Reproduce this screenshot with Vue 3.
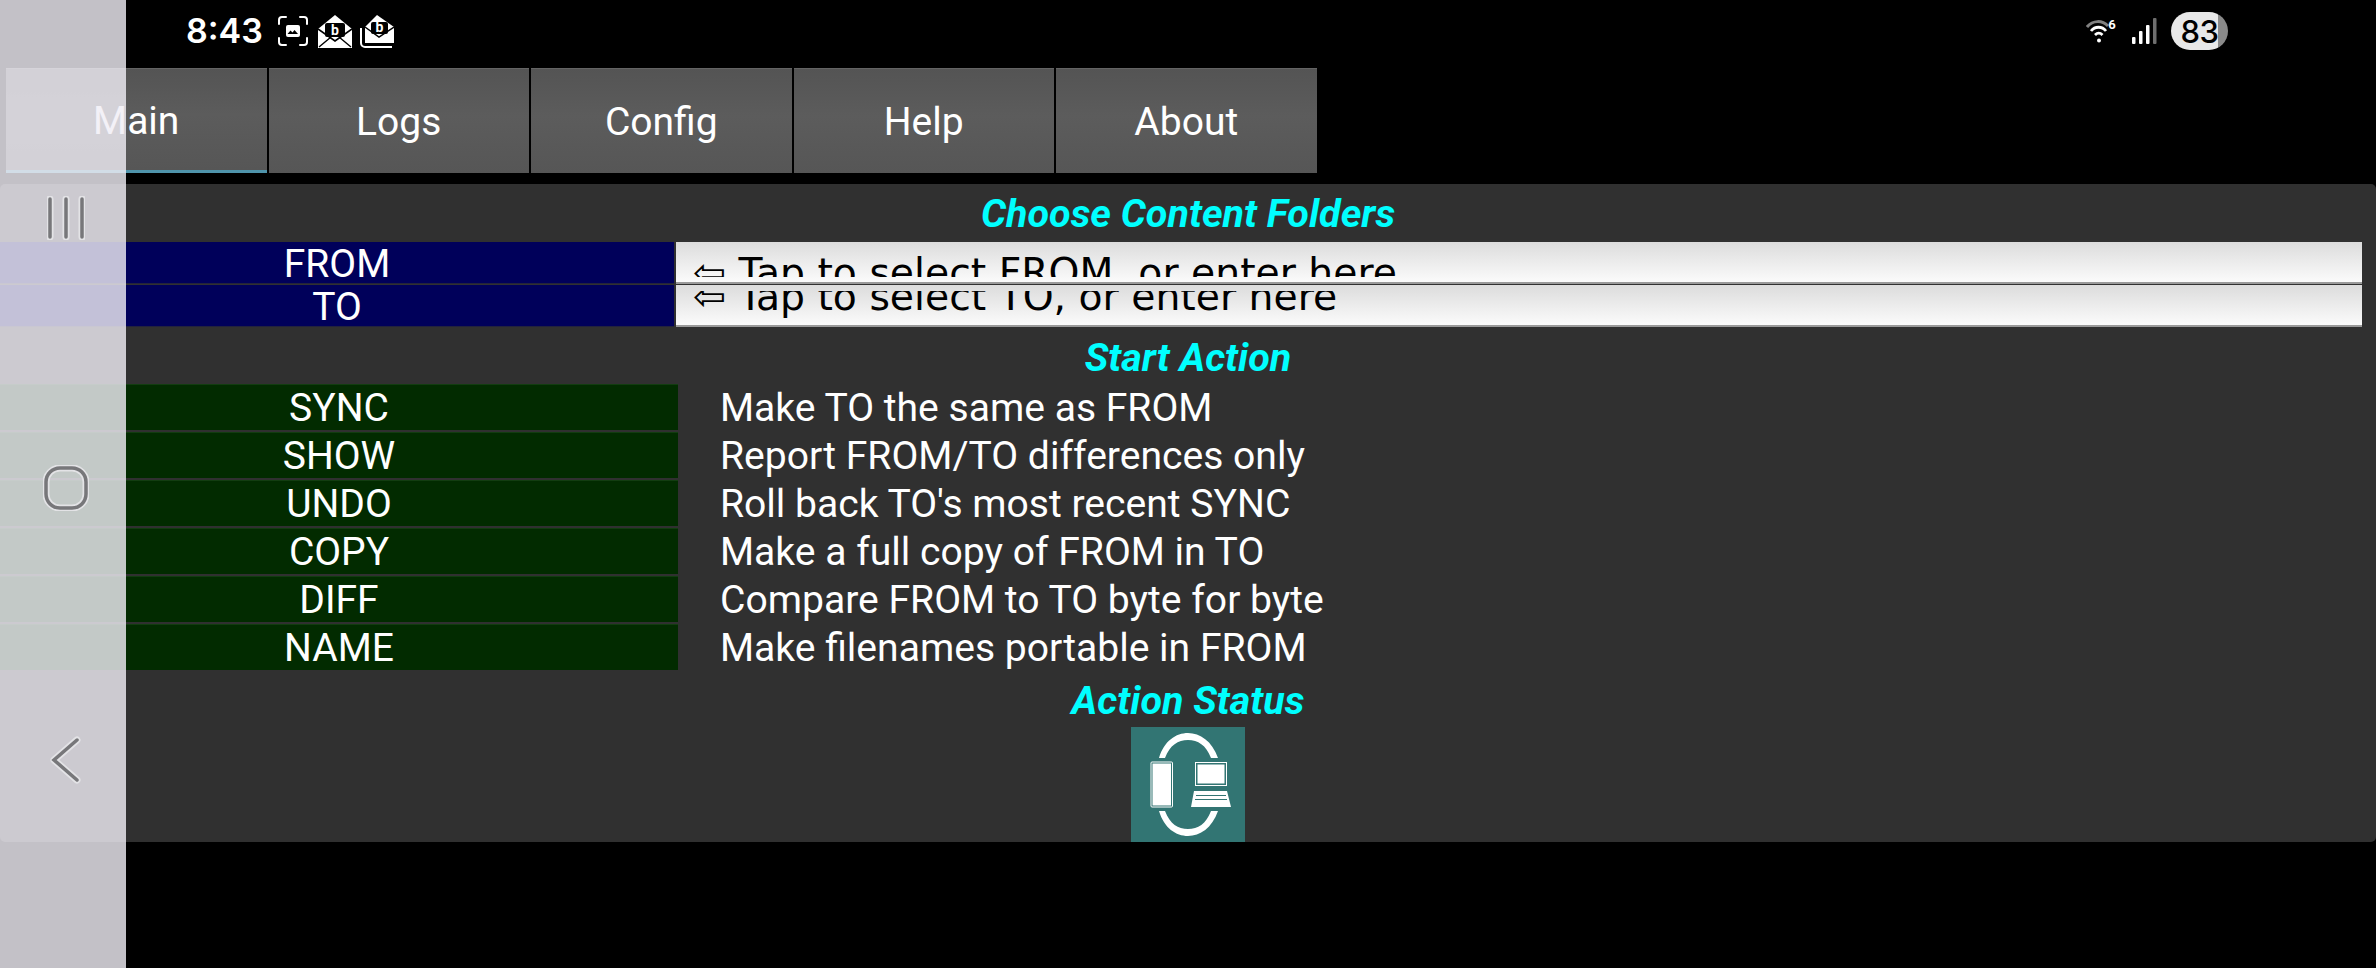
<script setup>
const tabs = ['Main', 'Logs', 'Config', 'Help', 'About']
const actions = [
  ['SYNC', 'Make TO the same as FROM'],
  ['SHOW', 'Report FROM/TO differences only'],
  ['UNDO', "Roll back TO's most recent SYNC"],
  ['COPY', 'Make a full copy of FROM in TO'],
  ['DIFF', 'Compare FROM to TO byte for byte'],
  ['NAME', 'Make filenames portable in FROM'],
]
const envelopeBody = 'M0 14 L17 0 L34 14 L34 33 L0 33 Z'
</script>

<template>
  <div class="screen">
    <header class="status">
      <span class="time">8:43</span>
      <svg class="ic-shot" width="30" height="30" viewBox="0 0 30 30" fill="none">
        <path d="M1 8V4a3 3 0 0 1 3-3h4M22 1h4a3 3 0 0 1 3 3v4M29 22v4a3 3 0 0 1-3 3h-4M8 29H4a3 3 0 0 1-3-3v-4" stroke="#fff" stroke-width="2" stroke-linecap="round"/>
        <rect x="8" y="9" width="14" height="12" rx="2" fill="#fff"/>
        <path d="M9.5 18l3-3.5 2 2 2-2.5 3.5 4z" fill="#000"/>
      </svg>
      <svg class="ic-env" width="34" height="33" viewBox="0 0 34 33">
        <path :d="envelopeBody" fill="#fff"/>
        <rect x="7" y="8" width="20" height="14" rx="2" fill="#000"/>
        <path d="M0 14l17 12 17-12" fill="none" stroke="#000" stroke-width="1.6"/>
        <path d="M1 32l12-10M33 32L21 22" stroke="#000" stroke-width="1.4"/>
        <text x="17" y="20" text-anchor="middle" class="env-b">b</text>
      </svg>
      <svg class="ic-env second" width="34" height="33" viewBox="0 0 34 33">
        <path d="M5 12 L17 0 L34 12 L34 28 L5 28 Z" fill="#fff"/>
        <rect x="11" y="7" width="17" height="12" rx="2" fill="#000"/>
        <path d="M5 12l14 10 15-10" fill="none" stroke="#000" stroke-width="1.5"/>
        <path d="M1 13v15a4 4 0 0 0 4 4h27" fill="none" stroke="#fff" stroke-width="2"/>
        <text x="19.5" y="17" text-anchor="middle" class="env-b">b</text>
      </svg>
      <div class="status-right">
        <svg width="31" height="24" viewBox="0 0 31 24" fill="none">
          <path d="M1 8C7 1 16 1 22 7" stroke="#808080" stroke-width="3"/>
          <path d="M5 12c4-5 11-5 15 0" stroke="#fff" stroke-width="2.8"/>
          <path d="M9 16c2.500-2.500 5-2.500 7.500 0" stroke="#fff" stroke-width="2.8"/>
          <circle cx="13" cy="21.500" r="2" fill="#fff"/>
          <text x="26" y="10" text-anchor="middle" class="wifi-6">6</text>
        </svg>
        <svg class="signal" width="25" height="26" viewBox="0 0 25 26">
          <rect x="0" y="19" width="3.500" height="7" rx="1" fill="#fff"/>
          <rect x="7" y="13" width="3.500" height="13" rx="1" fill="#fff"/>
          <rect x="14" y="7" width="3.500" height="19" rx="1" fill="#fff"/>
          <rect x="21" y="0" width="3.500" height="26" rx="1" fill="#6e6e6e"/>
        </svg>
        <div class="battery"><span>83</span></div>
      </div>
    </header>

    <nav class="tabs">
      <div v-for="(tab, i) in tabs" :key="tab" class="tab" :class="{ active: i === 0 }">{{ tab }}</div>
    </nav>

    <main class="content">
      <h2 class="title first">Choose Content Folders</h2>
      <div class="folders">
        <div class="folder">
          <div class="folder-label">FROM</div>
          <div class="field">
            <div class="clip clip-from"><span class="field-text"><span class="arrow">⇦</span> Tap to select FROM, or enter here</span></div>
          </div>
        </div>
        <div class="folder">
          <div class="folder-label">TO</div>
          <div class="field">
            <div class="clip clip-to"><span class="field-text"><span class="arrow">⇦</span> Tap to select TO, or enter here</span></div>
          </div>
        </div>
      </div>

      <h2 class="title">Start Action</h2>
      <div class="actions">
        <div v-for="a in actions" :key="a[0]" class="action">
          <div class="action-btn">{{ a[0] }}</div>
          <div class="action-desc">{{ a[1] }}</div>
        </div>
      </div>

      <h2 class="title">Action Status</h2>
      <div class="status-icon">
        <svg width="114" height="115" viewBox="0 0 114 115">
          <rect width="114" height="115" fill="#327573"/>
          <path d="M28 31C33 14 45 6 57 6C69 6 81 14 87 31L80 31C75 18 67 13 57 13C47 13 39 18 34 31Z" fill="#fff"/>
          <path d="M28 84C33 101 45 109 57 109C69 109 81 101 87 84L80 84C75 97 67 102 57 102C47 102 39 97 34 84Z" fill="#fff"/>
          <rect x="20" y="35" width="21.500" height="45" rx="1" fill="none" stroke="#fff" stroke-width="1"/>
          <rect x="21.500" y="36.500" width="18.500" height="42" fill="#fff"/>
          <rect x="64.500" y="35.500" width="31" height="23" fill="none" stroke="#fff" stroke-width="1"/>
          <rect x="66.500" y="37.500" width="27" height="19" fill="#fff"/>
          <path d="M63 64H96L100 80H60Z" fill="#fff"/>
          <path d="M65 68.500H95M64 72.500H96" stroke="#327573" stroke-width="1"/>
        </svg>
      </div>
    </main>

    <aside class="nav-overlay">
      <svg width="38" height="44" viewBox="0 0 38 44" fill="none" class="nav-icon">
        <path d="M3 3v38M19 3v38M35 3v38" stroke="#e3e3e6" stroke-width="7" stroke-linecap="round"/>
        <path d="M3 3v38M19 3v38M35 3v38" stroke="#77777a" stroke-width="3.500" stroke-linecap="round"/>
      </svg>
      <svg width="46" height="46" viewBox="0 0 46 46" fill="none" class="nav-icon">
        <rect x="3" y="3" width="40" height="40" rx="14" stroke="#e3e3e6" stroke-width="7"/>
        <rect x="3" y="3" width="40" height="40" rx="14" stroke="#77777a" stroke-width="3.500"/>
      </svg>
      <svg width="34" height="48" viewBox="0 0 34 48" fill="none" class="nav-icon">
        <path d="M28 4L5 24l23 20" stroke="#e3e3e6" stroke-width="7" stroke-linecap="round" stroke-linejoin="round"/>
        <path d="M28 4L5 24l23 20" stroke="#77777a" stroke-width="3.500" stroke-linecap="round"/>
      </svg>
    </aside>
  </div>
</template>

<style>
html, body { margin: 0; background: #000; overflow: hidden; }
</style>

<style scoped>
.screen {
  position: relative;
  width: 2376px;
  height: 968px;
  background: #000;
  color: #fff;
  font-family: Roboto, sans-serif;
  overflow: hidden;
}
.status {
  height: 68px;
  display: flex;
  align-items: center;
  padding: 0 148px 6px 186px;
  box-sizing: border-box;
}
.time {
  font-family: Inter, sans-serif;
  font-weight: 600;
  font-size: 34px;
  line-height: 1;
  margin-right: 15px;
}
.ic-env { margin-left: 10px; }
.ic-env.second { margin-left: 8px; }
.env-b {
  fill: #fff;
  font: 700 14px Roboto, sans-serif;
}
.wifi-6 {
  fill: #fff;
  font: 700 13px Roboto, sans-serif;
}
.status-right {
  margin-left: auto;
  display: flex;
  align-items: center;
}
.signal { margin-left: 15px; }
.battery {
  margin-left: 14px;
  width: 57px;
  height: 38px;
  border-radius: 19px;
  background: linear-gradient(90deg, #e8e8e8 82%, #8a8a8a 82%);
  color: #000;
  font-family: Inter, sans-serif;
  font-weight: 500;
  font-size: 31px;
  display: flex;
  align-items: center;
  justify-content: center;
  letter-spacing: -0.500px;
}
.tabs {
  height: 105px;
  display: flex;
  gap: 2px;
  padding-left: 6px;
}
.tab {
  width: 260.500px;
  box-sizing: border-box;
  display: flex;
  align-items: center;
  justify-content: center;
  font-size: 39px;
  padding-top: 2px;
  background: linear-gradient(180deg, #545454 0%, #5c5c5c 45%, #565656 100%);
  border-top: 1px solid #646464;
}
.tab.active {
  border-bottom: 3px solid #4f94ab;
}
.content {
  margin-top: 11px;
  height: 658px;
  background: #303030;
  border-radius: 5px;
  display: flex;
  flex-direction: column;
}
.title {
  margin: 0;
  height: 58px;
  padding-top: 4px;
  box-sizing: border-box;
  display: flex;
  align-items: center;
  justify-content: center;
  color: #0ff;
  font-size: 39.500px;
  font-weight: 700;
  font-style: italic;
}
.title.first { padding-top: 1px; }
.folders {
  display: flex;
  flex-direction: column;
  gap: 1px;
}
.folder {
  height: 42px;
  display: flex;
  gap: 2px;
}
.folder-label {
  width: 674px;
  background: #00005a;
  font-size: 39px;
  padding-top: 3px;
  display: flex;
  align-items: center;
  justify-content: center;
  border-bottom: 1px solid #22223e;
  box-sizing: border-box;
}
.field {
  width: 1686px;
  background: linear-gradient(180deg, #dcdcdc 0%, #fbfbfb 100%);
  border-bottom: 2px solid #9a9a9a;
  box-sizing: border-box;
  color: #000;
}
.clip {
  height: 35px;
  overflow: hidden;
  font-family: "DejaVu Sans", sans-serif;
  font-size: 39.300px;
  white-space: nowrap;
  padding-left: 17px;
  box-sizing: border-box;
}
.clip-to { margin-top: 6px; }
.field-text {
  display: block;
  line-height: 44px;
}
.clip-from .field-text { margin-top: 9px; }
.clip-to .field-text { margin-top: -16px; }
.actions {
  display: flex;
  flex-direction: column;
  gap: 2px;
  margin-bottom: -1px;
}
.action {
  height: 46px;
  display: flex;
  align-items: center;
}
.action-btn {
  width: 678px;
  height: 100%;
  background: #022b00;
  font-size: 39px;
  padding-top: 1px;
  display: flex;
  align-items: center;
  justify-content: center;
  border-top: 1px solid #123d10;
  box-sizing: border-box;
}
.action-desc {
  margin-left: 42px;
  font-size: 39.100px;
  padding-top: 1px;
}
.status-icon {
  display: flex;
  justify-content: center;
  height: 115px;
}
.status-icon svg { display: block; }
.nav-overlay {
  position: absolute;
  left: 0;
  top: 0;
  width: 126px;
  height: 968px;
  background: rgba(240, 238, 245, 0.81);
  display: flex;
  flex-direction: column;
  align-items: center;
  padding: 196px 0 0 5px;
  box-sizing: border-box;
  gap: 225px;
}
.nav-icon { display: block; flex: none; }
</style>
